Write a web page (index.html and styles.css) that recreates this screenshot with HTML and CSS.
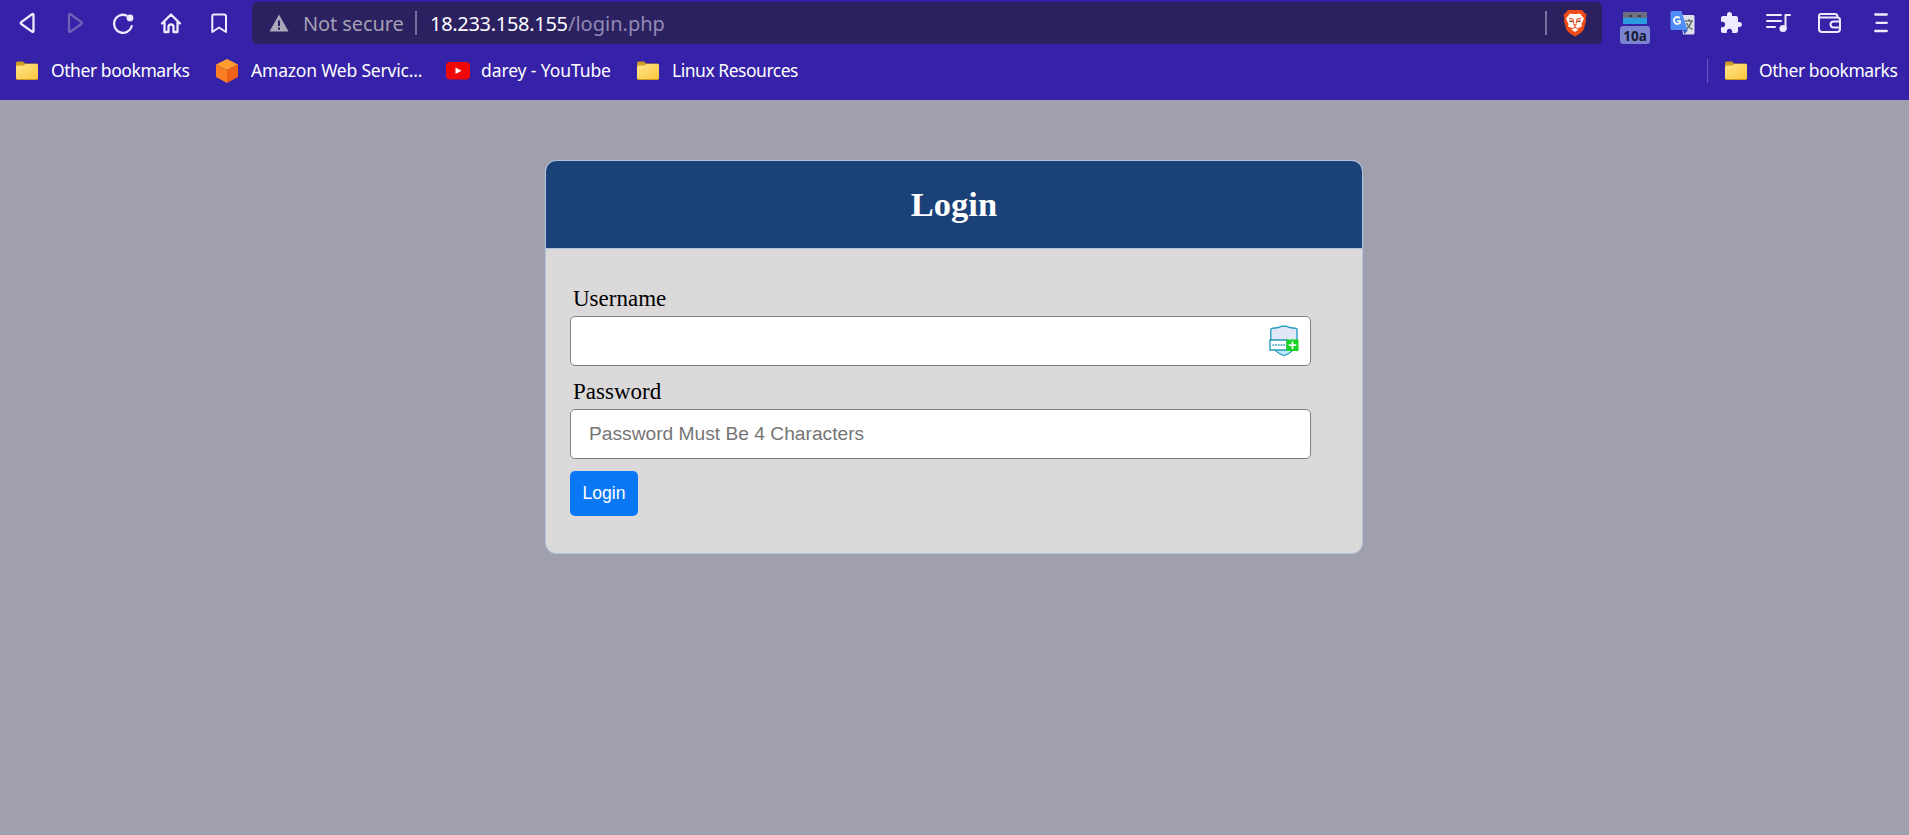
FILE: index.html
```html
<!DOCTYPE html>
<html lang="en">
<head>
<meta charset="utf-8">
<title>Login</title>
<link rel="stylesheet" href="styles.css">
</head>
<body>
<svg width="0" height="0" class="defs" aria-hidden="true">
  <defs>
    <linearGradient id="fold" x1="0" y1="0" x2="1" y2="1"><stop offset="0" stop-color="#ffe48a"/><stop offset="1" stop-color="#fbc83f"/></linearGradient>
    <symbol id="folder" viewBox="0 0 24 20">
      <path d="M1 2Q1 .5 2.500 .5H8L10 2.500H21.500Q23 2.500 23 4V17.500Q23 19 21.500 19H2.500Q1 19 1 17.500Z" fill="#cf9c26"/>
      <path d="M1 6Q1 4.500 2.500 4.500H8.500L10.500 3H21.500Q23 3 23 4.500V16.500Q23 18 21.500 18H2.500Q1 18 1 16.500Z" fill="url(#fold)"/>
    </symbol>
  </defs>
</svg>
<header class="browser">
  <div class="toolbar">
    <nav class="nav">
      <svg width="48" height="46" viewBox="0 0 48 46"><path d="M33.500 15V31Q33.500 32.500 32 31.600L21.300 24Q20.300 23 21.300 22.100L32 14.300Q33.500 13.500 33.500 15Z" class="line"/></svg>
      <svg width="48" height="46" viewBox="0 0 48 46"><path d="M21 15V31Q21 32.500 22.500 31.600L33.300 24Q34.300 23 33.300 22.100L22.500 14.300Q21 13.500 21 15Z" class="line dim"/></svg>
      <svg width="48" height="46" viewBox="0 0 48 46"><path d="M30.500 15.500A9 9 0 1 0 35.700 26.200" class="line"/><circle cx="34" cy="18" r="3.400" fill="#eeeaff"/></svg>
      <svg width="48" height="46" viewBox="0 0 48 46"><path d="M18 23.500L27 14.500L36 23.500M20.500 22.500V32H24.500V27Q24.500 24.500 27 24.500T29.500 27V32H33.500V22.500" class="line"/></svg>
      <svg width="48" height="46" viewBox="0 0 48 46"><path d="M21.500 14.500H32Q34 14.500 34 16.500V32L27 27.500L20.300 32V16Q20.300 14.500 21.500 14.500Z" class="line thin"/></svg>
    </nav>
    <div class="address">
      <svg class="warn" width="20" height="18" viewBox="0 0 20 18"><path d="M10 .5L19.500 17.500H.5Z" fill="#a9a7b9"/><path d="M10 6.500V12M10 13.500V15.700" stroke="#2b2160" stroke-width="2"/></svg>
      <span class="insecure">Not secure</span>
      <i class="bar"></i>
      <span class="host">18.233.158.155</span><span class="path">/login.php</span>
      <i class="bar end"></i>
      <svg class="brave" width="24" height="28" viewBox="0 0 24 28">
        <path d="M5 1H19L21.500 4L23.500 5.500L22.700 9L23 12L20.500 21L17 24.500L12 27.500L7 24.500L3.500 21L1 12L1.300 9L.5 5.500L2.500 4Z" fill="#f04b16"/>
        <path d="M7 4.500L10 5H14L17 4.500L21 9.500L18.500 15L19 17.500L15.500 18.800L15 21L12 23L9 21L8.500 18.800L5 17.500L5.500 15L3 9.500Z" fill="#fff8f2"/>
        <path d="M6 9.300L10 10.200L10.800 14.500M18 9.300L14 10.200L13.200 14.500" fill="none" stroke="#e84b1c" stroke-width="1.100"/>
        <path d="M6.500 12L9.700 12.600M17.500 12L14.300 12.600" stroke="#7b3426" stroke-width="1.300"/>
        <path d="M9.800 15.300H14.200L12 17.300Z" fill="#e84b1c"/>
        <path d="M12 17V18.500M9 19.800L12 18.300L15 19.800" fill="none" stroke="#e84b1c" stroke-width="1"/>
      </svg>
    </div>
    <div class="extensions">
      <div class="notes">
        <svg width="24" height="13" viewBox="0 0 24 13"><path d="M0 0H24V6H0Z" fill="#6d707e"/><path d="M0 6H24V12H0Z" fill="#299de0"/><path d="M6 4H9M15 4H18" stroke="#353b51" stroke-width="2"/></svg>
        <b>10a</b>
      </div>
      <svg class="translate" width="25" height="26" viewBox="0 0 25 26">
        <path d="M11 5H23Q24.500 5 24.500 6.500V23Q24.500 24.500 23 24.500H13Z" fill="#dedfe8"/>
        <path d="M15 11H23M19 9V11M21.500 11Q20 17 15 20M16.500 13Q19 18 22.500 19.500" fill="none" stroke="#65766f" stroke-width="1.600"/>
        <path d="M13 20H18L14.500 24.500Z" fill="#3157bd"/>
        <path d="M2 1H11.500L17.500 20H2Q.5 20 .5 18.500V2.500Q.5 1 2 1Z" fill="#4f8df5"/>
        <path d="M9.800 8Q6.500 5.800 4.500 8.500Q3.200 11 5 13Q7.500 15 10 12.800V11H7.200" fill="none" stroke="#fff" stroke-width="1.700"/>
      </svg>
      <svg class="puzzle" width="24" height="24" viewBox="0 0 24 24"><path d="M20.500 11H19V7C19 5.900 18.100 5 17 5H13V3.500C13 2.120 11.880 1 10.500 1S8 2.120 8 3.500V5H4C2.900 5 2.010 5.900 2.010 7V10.800H3.500C4.990 10.800 6.200 12.010 6.200 13.500S4.990 16.200 3.500 16.200H2V20C2 21.100 2.900 22 4 22H7.800V20.500C7.800 19.010 9.010 17.800 10.500 17.800S13.200 19.010 13.200 20.500V22H17C18.100 22 19 21.100 19 20V16H20.500C21.880 16 23 14.880 23 13.500S21.880 11 20.500 11Z" fill="#eeeaff"/></svg>
      <svg class="music" width="25" height="22" viewBox="0 0 25 22"><path d="M1 3H15M1 9H15M1 15H9M19.500 17V3H24" class="line thin"/><circle cx="17" cy="16.500" r="3.600" fill="#eeeaff"/></svg>
      <svg class="wallet" width="25" height="22" viewBox="0 0 25 22"><path d="M2 4V17Q2 20 5 20H20Q23 20 23 17V8Q23 5.500 20.500 5.500H3.500Q2 5.500 2 4Q2 2 4 2H18Q20.500 2 20.500 5M23 9.500H17Q13.500 9.500 13.500 12.500T17 15.500H23" class="line thin"/></svg>
      <svg class="menu" width="14" height="20" viewBox="0 0 14 20"><path d="M1.200 1.500H12.800M2.500 9.800H12.800M1.200 18H12.800" class="line"/></svg>
    </div>
  </div>
  <div class="bookmarks">
    <a class="mark m1"><svg width="24" height="20"><use href="#folder"/></svg><span class="t-other">Other bookmarks</span></a>
    <a class="mark m2"><svg width="24" height="26" viewBox="0 0 24 26"><path d="M12 1L23 6.500L12 12L1 6.500Z" fill="#ff9d2e"/><path d="M1 6.500L12 12V25L1 19Z" fill="#fa7f23"/><path d="M23 6.500L12 12V25L23 19Z" fill="#ed6217"/></svg><span class="t-aws">Amazon Web Servic...</span></a>
    <a class="mark m3"><svg width="24" height="18" viewBox="0 0 24 18"><rect width="24" height="17.500" rx="4" fill="#f00808"/><path d="M9.500 5.500L15.500 8.700L9.500 12Z" fill="#fff"/></svg><span class="t-yt">darey - YouTube</span></a>
    <a class="mark m4"><svg width="24" height="20"><use href="#folder"/></svg><span class="t-linux">Linux Resources</span></a>
    <i class="divider"></i>
    <a class="mark m5"><svg width="24" height="20"><use href="#folder"/></svg><span class="t-other">Other bookmarks</span></a>
  </div>
</header>
<main class="page">
  <section class="card">
    <h1 class="title">Login</h1>
    <form class="form">
      <label class="label" for="user">Username</label>
      <div class="field">
        <input class="input" id="user" type="text">
        <svg class="shield" width="30" height="32" viewBox="0 0 30 32">
          <path d="M1.800 5Q1.800 3.500 3.500 3.300Q10 3 13 1.200H17Q20 3 26.500 3.300Q28 3.500 28 5V19Q25 27 15 30.500Q5 27 1.800 19Z" fill="#e0e7f7" stroke="#2c9fc0" stroke-width="1.400"/>
          <path d="M6 25H24L15 30Z" fill="#bfe8fa"/>
          <path d="M1 15H18V25H1Z" fill="#fff" stroke="#2599bb" stroke-width="1.400"/>
          <path d="M3.500 20H16" stroke="#2599bb" stroke-width="1.500" stroke-dasharray="1.700 1"/>
          <path d="M17.500 14.500H29.500V26H17.500Z" fill="#18d522"/>
          <path d="M23.500 16.500V24M19.700 20.200H27.300" stroke="#fff" stroke-width="1.700"/>
        </svg>
      </div>
      <label class="label second" for="pass">Password</label>
      <input class="input" id="pass" type="password" placeholder="Password Must Be 4 Characters">
      <button class="button" type="button">Login</button>
    </form>
  </section>
</main>
</body>
</html>
```
FILE: styles.css
```css
* { box-sizing: border-box; }
body { margin: 0; height: 835px; overflow: hidden; background: #a09fad; font-family: "Liberation Serif", serif; }
.defs { position: absolute; }
svg { display: block; flex: none; }
.browser { height: 100px; background: #3522a8; font-family: "Noto Sans", sans-serif; }
.toolbar { display: flex; height: 46px; }
.nav { display: flex; width: 252px; flex: none; }
.line { fill: none; stroke: #eeeaff; stroke-width: 2.3; stroke-linecap: round; stroke-linejoin: round; }
.thin { stroke-width: 2; }
.dim { stroke: #6f62b8; }
.address { display: flex; align-items: center; width: 1350px; height: 42px; margin-top: 2px; padding-left: 17px; border-radius: 5px; background: #2b2160; font-size: 20px; white-space: nowrap; flex: none; }
.insecure { width: 112px; margin-left: 14px; color: #a3a0b4; letter-spacing: -0.1px; }
.bar { width: 2px; height: 24px; background: #77709d; flex: none; }
.host { width: 138px; margin-left: 13px; color: #fff; letter-spacing: -0.3px; }
.path { color: #918ab5; letter-spacing: 0; }
.end { margin-left: auto; }
.brave { margin: 0 15px 0 16px; }
.extensions { display: flex; align-items: flex-start; }
.notes { display: flex; flex-direction: column; align-items: center; width: 30px; margin: 12px 0 0 18px; }
.notes b { width: 30px; height: 18px; margin-top: 1px; border-radius: 3px; background: #7983d0; color: #171b33; font-size: 13.5px; line-height: 20px; text-align: center; }
.translate { margin: 10px 0 0 20px; }
.puzzle { margin: 11px 0 0 24px; }
.music { margin: 12px 0 0 23px; }
.wallet { margin: 12px 0 0 26px; }
.menu { margin: 13px 0 0 32px; }
.bookmarks { display: flex; align-items: center; height: 50px; padding: 0 10px 0 15px; font-size: 17.5px; color: #fff; white-space: nowrap; }
.mark { display: flex; align-items: center; gap: 12px; height: 26px; flex: none; }
.mark span { margin-top: -2px; }
.m1 { width: 200px; }
.m2 { width: 231px; }
.m3 { width: 190px; }
.m3 svg, .m5 svg { margin-right: -1px; }
.t-other { letter-spacing: -0.43px; }
.t-aws { letter-spacing: -0.2px; }
.t-yt { letter-spacing: -0.1px; }
.t-linux { letter-spacing: -0.48px; }
.divider { width: 1px; height: 24px; margin-left: auto; background: #6759bd; }
.m5 { width: 175px; margin-left: 16px; }
.page { display: flex; justify-content: center; padding: 60px 1px 0 0; }
.card { width: 818px; height: 394px; border: 1px solid #b0c4de; border-radius: 11px; background: #dbd9da; overflow: hidden; }
.title { height: 88px; margin: 0; border-bottom: 1px solid #b0c4de; background: #1b4179; color: #fff; font-size: 34.5px; font-weight: bold; line-height: 87px; text-align: center; }
.form { padding: 37px 24px 0; }
.label { display: block; height: 30px; padding-left: 3px; font-size: 23px; line-height: 26px; color: #000; }
.second { margin-top: 13px; }
.field { position: relative; width: 741px; }
.input { display: block; width: 741px; height: 50px; padding: 0 18px; border: 1px solid #808080; border-radius: 5px; background: #fff; font: 19.2px "Liberation Sans", sans-serif; }
.input::placeholder { color: #757575; }
.shield { position: absolute; right: 12px; top: 9px; }
.button { display: block; width: 68px; height: 45px; margin-top: 12px; padding: 0; border: 0; border-radius: 5px; background: #0a78f5; color: #fff; font: 17.6px "Liberation Sans", sans-serif; }
```
